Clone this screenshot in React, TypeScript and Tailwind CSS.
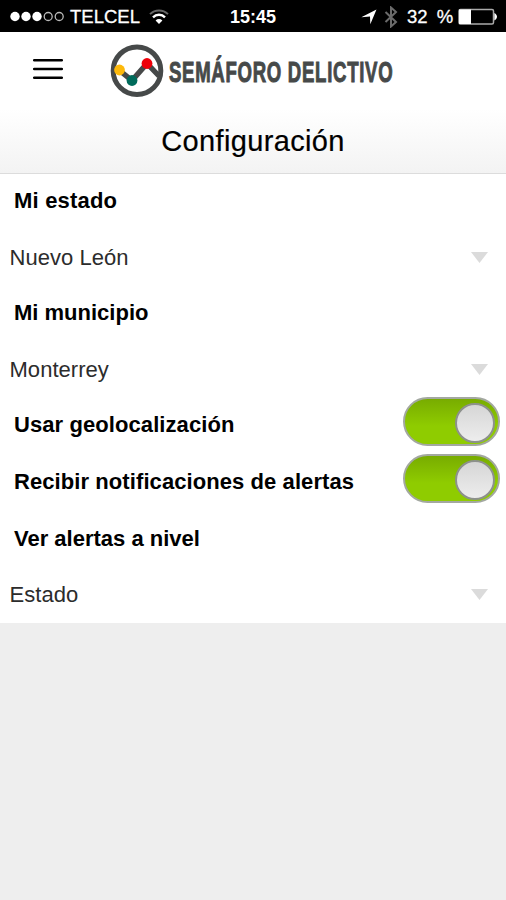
import clsx from 'clsx'

const HELVETICA = "font-['Liberation_Sans',Arial,sans-serif]"

function StatusBar() {
  return (
    <div className="flex h-8 items-center bg-black text-[18.5px] leading-8 text-white [-webkit-text-stroke:0.3px_white]">
      <div className="flex w-[230px] items-center pl-[9px]">
        <svg width="56" height="12" viewBox="0 0 56 12" aria-hidden="true">
          <g fill="#fff">
            <circle cx="6" cy="6.5" r="4.7" />
            <circle cx="17" cy="6.5" r="4.7" />
            <circle cx="28" cy="6.5" r="4.7" />
          </g>
          <g fill="none" stroke="#b8b8b8" strokeWidth="1.3">
            <circle cx="39.2" cy="6.5" r="4" />
            <circle cx="50.2" cy="6.5" r="4" />
          </g>
        </svg>
        <span className="mt-px ml-[5px]">TELCEL</span>
        <svg className="mt-0.5 ml-[9px]" width="20" height="16" viewBox="0 0 20 16" aria-hidden="true">
          <path d="M1 5.2a12.7 12.7 0 0 1 18 0" fill="none" stroke="#666" strokeWidth="1.9" />
          <path d="M4 8.3a8.5 8.5 0 0 1 12 0" fill="none" stroke="#fff" strokeWidth="2.4" />
          <path d="M6.6 11.5a4.8 4.8 0 0 1 6.8 0L10 15z" fill="#fff" />
        </svg>
      </div>
      <span className="mt-px w-[131px] text-[18px] font-bold [-webkit-text-stroke:0px]">15:45</span>
      <svg className="mt-0.5" width="16" height="16" viewBox="0 0 16 16" aria-hidden="true">
        <path d="M15.5 0.5 9.3 15.2 9 7.6 0.3 8.2z" fill="#fff" />
      </svg>
      <svg className="mt-px ml-[7px]" width="14" height="22" viewBox="0 0 14 22" aria-hidden="true">
        <path d="m1.5 6 10.5 10-5 4.5v-19L12 6 1.5 16" fill="none" stroke="#6b6b6b" strokeWidth="2" />
      </svg>
      <span className="mt-px ml-[9px] [word-spacing:4px]">32 %</span>
      <svg className="mt-0.5 ml-[5px] shrink-0" width="40" height="18" viewBox="0 0 40 18" aria-hidden="true">
        <rect x="1" y="1.5" width="34.5" height="14.5" rx="1.5" fill="none" stroke="#aaa" strokeWidth="1.5" />
        <rect x="1" y="1.5" width="12" height="14.5" fill="#fff" />
        <path d="M36.3 5c3.6 1.8 3.6 5.7 0 7.5z" fill="#fff" />
      </svg>
    </div>
  )
}

function Logo() {
  return (
    <svg width="288" height="56" viewBox="0 0 288 56" role="img" aria-label="Semáforo Delictivo">
      <circle cx="27" cy="27.7" r="23.8" fill="#fff" stroke="#464949" strokeWidth="5" />
      <path d="M9 27 22 37.5 37 20.5 49 33" fill="none" stroke="#464949" strokeWidth="5.4" />
      <circle cx="9.5" cy="27" r="5.4" fill="#fdb90b" />
      <circle cx="22" cy="37.5" r="5.4" fill="#006b5b" />
      <circle cx="37" cy="20.5" r="5.4" fill="#ee0009" />
      <text
        transform="translate(59 38.8) scale(0.63 1)"
        textLength="355"
        lengthAdjust="spacing"
        fontSize="29.5"
        fontWeight="700"
        fill="#464949"
        stroke="#464949"
        strokeWidth="1"
      >
        SEMÁFORO DELICTIVO
      </text>
    </svg>
  )
}

function Header() {
  return (
    <header className="h-[142px] border-b border-[#dcdcdc] bg-linear-to-b from-white from-55% to-[#f3f3f3]">
      <div className="flex h-[78px] items-center pl-[33px]">
        <button type="button" aria-label="Menú" className="pb-1">
          <svg width="30" height="22" viewBox="0 0 30 22" aria-hidden="true">
            <path d="M1.2 2.2h27.6M1.2 11h27.6M1.2 19.8h27.6" stroke="#000" strokeWidth="2.5" strokeLinecap="round" />
          </svg>
        </button>
        <div className="ml-[47px]">
          <Logo />
        </div>
      </div>
      <h1 className="text-center text-[29px] leading-[62px] tracking-[0.35px] text-black [-webkit-text-stroke:0.2px_black]">
        Configuración
      </h1>
    </header>
  )
}

function Label({ text, className }: { text: string; className?: string }) {
  return (
    <div className={clsx('flex items-center pl-3.5 text-[22px] font-bold text-black', className)}>
      {text}
    </div>
  )
}

function Select({ value, className }: { value: string; className?: string }) {
  return (
    <div
      className={clsx(
        'flex items-center justify-between pr-[18px] pl-[9.5px] text-[22px] tracking-[0.04px] text-[#2c2c2c]',
        className
      )}
    >
      {value}
      <svg width="17" height="11" viewBox="0 0 17 11" aria-hidden="true">
        <path d="M0 0h17L8.5 11z" fill="#dbdbdb" />
      </svg>
    </div>
  )
}

function ToggleRow({ text }: { text: string }) {
  return (
    <div className="flex h-[57px] items-center justify-between pr-1.5 pl-3.5 text-[22px] font-bold tracking-[0.08px] text-black">
      <span className="whitespace-nowrap">{text}</span>
      <span
        role="switch"
        aria-checked="true"
        className="mb-1.5 flex h-[49px] w-[97px] shrink-0 items-center justify-end rounded-full border-2 border-[#a3a8a0] bg-linear-to-b from-[#78ac00] to-[#8fcc00] to-60% pt-0.5 pr-[3px]"
      >
        <span className="size-10 rounded-full border-2 border-[#8d918c] bg-linear-to-b from-[#d6d6d6] to-[#ededed]" />
      </span>
    </div>
  )
}

export default function App() {
  return (
    <div className={clsx('min-h-[900px] w-full bg-[#eeeeee]', HELVETICA)}>
      <StatusBar />
      <div className="bg-white">
        <Header />
        <main className="h-[449px]">
          <Label text="Mi estado" className="h-[53px] tracking-[0.2px]" />
          <Select value="Nuevo León" className="h-[60px]" />
          <Label text="Mi municipio" className="h-[51px]" />
          <Select value="Monterrey" className="h-[58px] pt-1" />
          <ToggleRow text="Usar geolocalización" />
          <ToggleRow text="Recibir notificaciones de alertas" />
          <Label text="Ver alertas a nivel" className="h-[56px]" />
          <Select value="Estado" className="h-[57px]" />
        </main>
      </div>
    </div>
  )
}
